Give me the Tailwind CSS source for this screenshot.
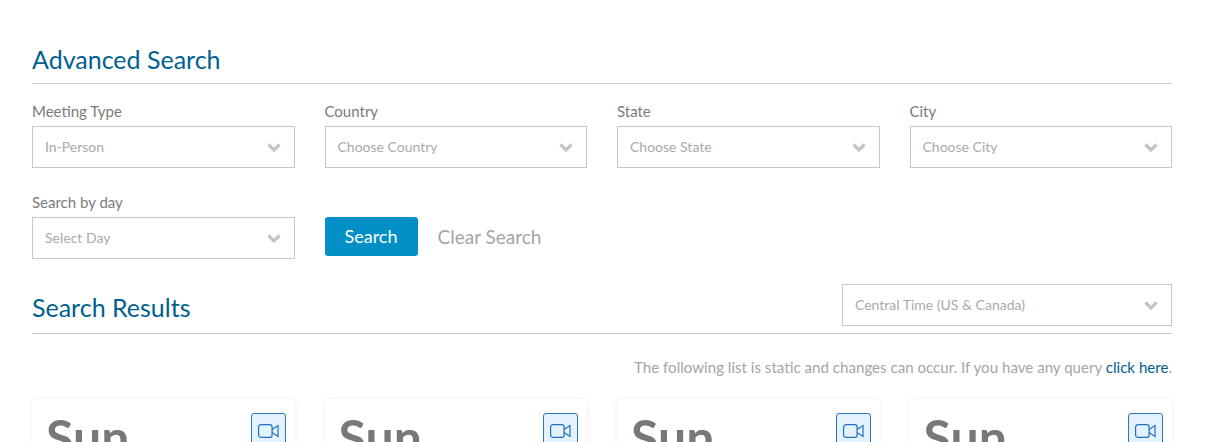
<!DOCTYPE html>
<html>
<head>
<script src="https://cdn.jsdelivr.net/npm/@tailwindcss/browser@4"></script>
</head>
<body class="bg-white font-['Lato','Liberation_Sans',sans-serif] overflow-hidden">
<div class="w-[1208px] h-[442px] overflow-hidden px-[32px] pr-[36px] pt-[44px]">
  <h2 class="text-[25px] leading-[30px] text-[#00618f] h-[40px] border-b border-[#c8c8c8]">Advanced Search</h2>
  <div class="grid grid-cols-4 gap-x-[30px] mt-[18px]">
    <div>
      <div class="text-[15px] leading-[18px] text-[#7b7b7b] mb-[6px]">Meeting Type</div>
      <div class="h-[42px] border border-[#c8c8c8] flex items-center justify-between pl-[12px] pr-[13px] text-[14px] text-[#aaa]"><span class="pb-[2px]">In-Person</span><svg width="14" height="9" viewBox="0 0 14 9"><path d="M1.5 1.5 7 7l5.5-5.5" fill="none" stroke="#c4c4c4" stroke-width="3.2"/></svg></div>
    </div>
    <div>
      <div class="text-[15px] leading-[18px] text-[#7b7b7b] mb-[6px]">Country</div>
      <div class="h-[42px] border border-[#c8c8c8] flex items-center justify-between pl-[12px] pr-[13px] text-[14px] text-[#aaa]"><span class="pb-[2px]">Choose Country</span><svg width="14" height="9" viewBox="0 0 14 9"><path d="M1.5 1.5 7 7l5.5-5.5" fill="none" stroke="#c4c4c4" stroke-width="3.2"/></svg></div>
    </div>
    <div>
      <div class="text-[15px] leading-[18px] text-[#7b7b7b] mb-[6px]">State</div>
      <div class="h-[42px] border border-[#c8c8c8] flex items-center justify-between pl-[12px] pr-[13px] text-[14px] text-[#aaa]"><span class="pb-[2px]">Choose State</span><svg width="14" height="9" viewBox="0 0 14 9"><path d="M1.5 1.5 7 7l5.5-5.5" fill="none" stroke="#c4c4c4" stroke-width="3.2"/></svg></div>
    </div>
    <div>
      <div class="text-[15px] leading-[18px] text-[#7b7b7b] mb-[6px]">City</div>
      <div class="h-[42px] border border-[#c8c8c8] flex items-center justify-between pl-[12px] pr-[13px] text-[14px] text-[#aaa]"><span class="pb-[2px]">Choose City</span><svg width="14" height="9" viewBox="0 0 14 9"><path d="M1.5 1.5 7 7l5.5-5.5" fill="none" stroke="#c4c4c4" stroke-width="3.2"/></svg></div>
    </div>
  </div>
  <div class="grid grid-cols-4 gap-x-[30px] mt-[25px]">
    <div>
      <div class="text-[15px] leading-[18px] text-[#7b7b7b] mb-[6px]">Search by day</div>
      <div class="h-[42px] border border-[#c8c8c8] flex items-center justify-between pl-[12px] pr-[13px] text-[14px] text-[#aaa]"><span class="pb-[2px]">Select Day</span><svg width="14" height="9" viewBox="0 0 14 9"><path d="M1.5 1.5 7 7l5.5-5.5" fill="none" stroke="#c4c4c4" stroke-width="3.2"/></svg></div>
    </div>
    <div class="col-span-2 flex items-start gap-[20px] pt-[24px]">
      <div class="w-[93px] h-[39px] rounded-[3px] bg-[#0090c5] text-white text-[18px] flex items-center justify-center">Search</div>
      <div class="text-[19px] leading-[39px] text-[#a3a6a8]">Clear Search</div>
    </div>
  </div>
  <div class="relative h-[59px] border-b border-[#c8c8c8] mt-[16px]">
    <h2 class="text-[25px] leading-[32px] text-[#00618f] pt-[16px]">Search Results</h2>
    <div class="absolute right-0 top-[9px] w-[330px] h-[42px] border border-[#c8c8c8] flex items-center justify-between pl-[12px] pr-[13px] text-[14px] text-[#aaa] bg-white"><span class="pb-[2px]">Central Time (US &amp; Canada)</span><svg width="14" height="9" viewBox="0 0 14 9"><path d="M1.5 1.5 7 7l5.5-5.5" fill="none" stroke="#c4c4c4" stroke-width="3.2"/></svg></div>
  </div>
  <p class="text-right text-[15.1px] leading-[20px] text-[#a3a6a8] mt-[23px]">The following list is static and changes can occur. If you have any query <a class="text-[#00618f]">click here</a>.</p>
  <div class="grid grid-cols-4 gap-x-[30px] mt-[22px]">
    <div class="relative h-[120px] rounded-[3px] shadow-[0_0_5px_rgba(0,0,0,0.08)] pl-[14px] pt-[8px] text-[50px] leading-[60px] font-bold text-[#76797c]">Sun<div class="absolute right-[9px] top-[14px] w-[35px] h-[40px] bg-[#e3f2fd] border border-[#2f74c0] rounded-[3px] flex items-start justify-center pt-[10px]"><svg width="21" height="14" viewBox="0 0 21 14" fill="none" stroke="#1f6fc4" stroke-width="1.2"><rect x="0.6" y="0.6" width="13.5" height="12.8" rx="2.5"/><path d="M14 5.5 20 1.5v11l-6-4"/></svg></div></div>
    <div class="relative h-[120px] rounded-[3px] shadow-[0_0_5px_rgba(0,0,0,0.08)] pl-[14px] pt-[8px] text-[50px] leading-[60px] font-bold text-[#76797c]">Sun<div class="absolute right-[9px] top-[14px] w-[35px] h-[40px] bg-[#e3f2fd] border border-[#2f74c0] rounded-[3px] flex items-start justify-center pt-[10px]"><svg width="21" height="14" viewBox="0 0 21 14" fill="none" stroke="#1f6fc4" stroke-width="1.2"><rect x="0.6" y="0.6" width="13.5" height="12.8" rx="2.5"/><path d="M14 5.5 20 1.5v11l-6-4"/></svg></div></div>
    <div class="relative h-[120px] rounded-[3px] shadow-[0_0_5px_rgba(0,0,0,0.08)] pl-[14px] pt-[8px] text-[50px] leading-[60px] font-bold text-[#76797c]">Sun<div class="absolute right-[9px] top-[14px] w-[35px] h-[40px] bg-[#e3f2fd] border border-[#2f74c0] rounded-[3px] flex items-start justify-center pt-[10px]"><svg width="21" height="14" viewBox="0 0 21 14" fill="none" stroke="#1f6fc4" stroke-width="1.2"><rect x="0.6" y="0.6" width="13.5" height="12.8" rx="2.5"/><path d="M14 5.5 20 1.5v11l-6-4"/></svg></div></div>
    <div class="relative h-[120px] rounded-[3px] shadow-[0_0_5px_rgba(0,0,0,0.08)] pl-[14px] pt-[8px] text-[50px] leading-[60px] font-bold text-[#76797c]">Sun<div class="absolute right-[9px] top-[14px] w-[35px] h-[40px] bg-[#e3f2fd] border border-[#2f74c0] rounded-[3px] flex items-start justify-center pt-[10px]"><svg width="21" height="14" viewBox="0 0 21 14" fill="none" stroke="#1f6fc4" stroke-width="1.2"><rect x="0.6" y="0.6" width="13.5" height="12.8" rx="2.5"/><path d="M14 5.5 20 1.5v11l-6-4"/></svg></div></div>
  </div>
</div>
</body>
</html>
